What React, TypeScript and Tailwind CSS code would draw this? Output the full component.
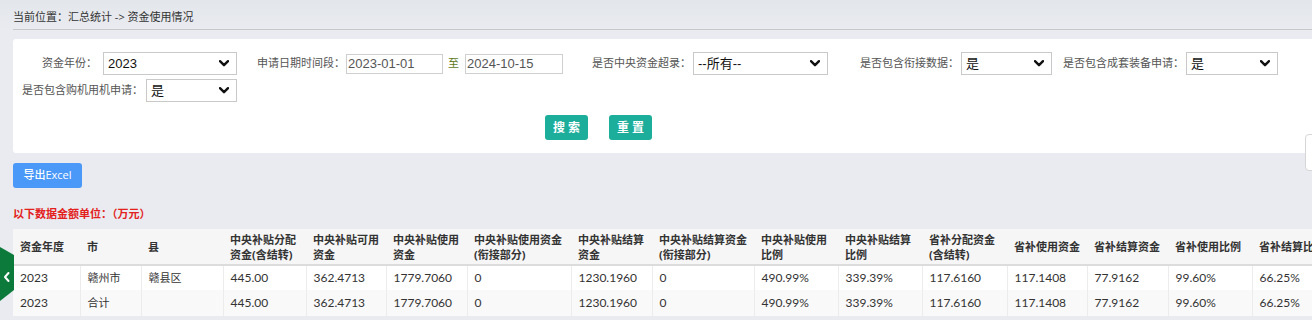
import React from "react";

const FONT = { fontFamily: '"Open Sans","Noto Sans CJK SC",sans-serif' };
const CTRL_FONT = { fontFamily: '"Liberation Sans","Noto Sans CJK SC",sans-serif' };
const NUM_FONT = { fontFamily: 'Lato,"Noto Sans CJK SC",sans-serif' };

function Chevron() {
  return (
    <svg width="10" height="7" viewBox="0 0 10 7" className="shrink-0">
      <polyline points="1,1.2 5,5.2 9,1.2" fill="none" stroke="#111" strokeWidth="2.4" strokeLinecap="round" strokeLinejoin="round" />
    </svg>
  );
}

function Select({ value, w }: { value: string; w: string }) {
  return (
    <div
      className={`${w} h-[23px] border border-[#c9c9c9] bg-white flex items-center justify-between pl-[4px] pr-[7px] text-[13px] text-[#111]`}
      style={CTRL_FONT}
    >
      <span>{value}</span>
      <Chevron />
    </div>
  );
}

function DateInput({ value, w }: { value: string; w: string }) {
  return (
    <div
      className={`${w} h-[20px] border border-[#cfcfcf] bg-white flex items-center pl-[1px] text-[13px] text-[#555]`}
      style={CTRL_FONT}
    >
      {value}
    </div>
  );
}

const cols = [
  { w: "w-[67px]", h: ["资金年度"] },
  { w: "w-[61px]", h: ["市"] },
  { w: "w-[82px]", h: ["县"] },
  { w: "w-[83px]", h: ["中央补贴分配", "资金(含结转)"] },
  { w: "w-[80px]", h: ["中央补贴可用", "资金"] },
  { w: "w-[81px]", h: ["中央补贴使用", "资金"] },
  { w: "w-[104px]", h: ["中央补贴使用资金", "(衔接部分)"] },
  { w: "w-[81px]", h: ["中央补贴结算", "资金"] },
  { w: "w-[102px]", h: ["中央补贴结算资金", "(衔接部分)"] },
  { w: "w-[84px]", h: ["中央补贴使用", "比例"] },
  { w: "w-[84px]", h: ["中央补贴结算", "比例"] },
  { w: "w-[85px]", h: ["省补分配资金", "(含结转)"] },
  { w: "w-[80px]", h: ["省补使用资金"] },
  { w: "w-[81px]", h: ["省补结算资金"] },
  { w: "w-[84px]", h: ["省补使用比例"] },
  { w: "w-[90px]", h: ["省补结算比例"] },
];

const rows = [
  ["2023", "赣州市", "赣县区", "445.00", "362.4713", "1779.7060", "0", "1230.1960", "0", "490.99%", "339.39%", "117.6160", "117.1408", "77.9162", "99.60%", "66.25%"],
  ["2023", "合计", "", "445.00", "362.4713", "1779.7060", "0", "1230.1960", "0", "490.99%", "339.39%", "117.6160", "117.1408", "77.9162", "99.60%", "66.25%"],
];

export default function App() {
  return (
    <div className="relative w-[1312px] h-[320px] overflow-hidden bg-[#e9ebf0] text-[11px] text-[#333]" style={FONT}>
      {/* breadcrumb */}
      <div className="bg-gradient-to-b from-[#e3e6eb] to-[#e9ebf0] pl-[13px]">
        <div className="h-[30px] flex items-center border-b border-[#c8c8c8] pt-[6px] text-[#333]">
          当前位置：汇总统计 -&gt; 资金使用情况
        </div>
      </div>

      {/* search panel */}
      <div className="ml-[13px] mt-[9px] bg-white rounded-tl-[3px] rounded-bl-[3px] pt-[13px] pb-[13px] pl-[9px] text-[#555]">
        <div className="flex items-center whitespace-nowrap">
          <div className="w-[75px] text-right">资金年份：</div>
          <div className="ml-[6px]"><Select value="2023" w="w-[134px]" /></div>

          <div className="ml-[20px] w-[88px] text-right">申请日期时间段：</div>
          <div className="ml-[1px]"><DateInput value="2023-01-01" w="w-[97px]" /></div>
          <div className="ml-[5px] w-[12px] text-[#5d7a1a]">至</div>
          <div className="ml-[5px]"><DateInput value="2024-10-15" w="w-[98px]" /></div>

          <div className="ml-[29px] w-[99px] text-right">是否中央资金超录：</div>
          <div className="ml-[2px]"><Select value="--所有--" w="w-[135px]" /></div>

          <div className="ml-[32px] w-[99px] text-right">是否包含衔接数据：</div>
          <div className="ml-[2px]"><Select value="是" w="w-[91px]" /></div>

          <div className="ml-[11px] w-[121px] text-right">是否包含成套装备申请：</div>
          <div className="ml-[2px]"><Select value="是" w="w-[92px]" /></div>
        </div>
        <div className="flex items-center whitespace-nowrap mt-[4px]">
          <div className="w-[121px] text-right">是否包含购机用机申请：</div>
          <div className="ml-[3px]"><Select value="是" w="w-[91px]" /></div>
        </div>
        <div className="flex mt-[13px] ml-[523px] gap-[21px]">
          <button className="w-[43px] h-[25px] rounded-[3px] bg-[#1cad9b] text-white text-[12px] font-semibold tracking-[3px] pl-[3px]">搜索</button>
          <button className="w-[43px] h-[25px] rounded-[3px] bg-[#1cad9b] text-white text-[12px] font-semibold tracking-[3px] pl-[3px]">重置</button>
        </div>
      </div>

      {/* export */}
      <div className="ml-[13px] mt-[10px]">
        <button className="w-[69px] h-[25px] rounded-[3px] bg-[#4a98f7] text-white text-[11px] font-medium">导出Excel</button>
      </div>

      <div className="ml-[13px] mt-[18px] text-[#e3201b] font-bold leading-[16px]">以下数据金额单位：（万元）</div>

      {/* table */}
      <div className="ml-[13px] mt-[7px] w-[1400px]">
        <table className="table-fixed border-collapse text-[11px] text-[#333]">
          <thead>
            <tr className="h-[36px] bg-[#f6f6f6] border-b-2 border-[#dcdcdc]">
              {cols.map((c, i) => (
                <th key={i} className={`${c.w} text-left font-bold pl-[7px] pr-[2px] leading-[15px] align-middle whitespace-nowrap`}>
                  {c.h.map((l, j) => (
                    <div key={j}>{l}</div>
                  ))}
                </th>
              ))}
            </tr>
          </thead>
          <tbody>
            {rows.map((r, ri) => (
              <tr key={ri} className={ri === 0 ? "h-[25px] bg-white" : "h-[26px] bg-[#f9f9f9]"}>
                {r.map((v, ci) => (
                  <td
                    key={ci}
                    className={`pl-[7px] whitespace-nowrap ${ci === 1 || ci === 2 ? "text-[11px]" : "text-[12px]"} ${ci > 0 ? "border-l border-[#ececec]" : ""}`}
                    style={ci === 1 || ci === 2 ? FONT : NUM_FONT}
                  >
                    {v}
                  </td>
                ))}
              </tr>
            ))}
          </tbody>
        </table>
      </div>

      {/* left green tab */}
      <div className="absolute left-0 top-[247px]">
        <svg width="14" height="54" viewBox="0 0 14 54">
          <polygon points="0,0 14,8 14,43 0,54" fill="#0b7a3b" />
          <polyline points="8.5,26 5,30 8.5,34" fill="none" stroke="#fff" strokeWidth="2" strokeLinecap="round" strokeLinejoin="round" />
        </svg>
      </div>

      {/* right small tab */}
      <div className="absolute left-[1305px] top-[134px] w-[12px] h-[37px] bg-white border border-[#d6d6d6] rounded-l-[4px]" />
    </div>
  );
}
